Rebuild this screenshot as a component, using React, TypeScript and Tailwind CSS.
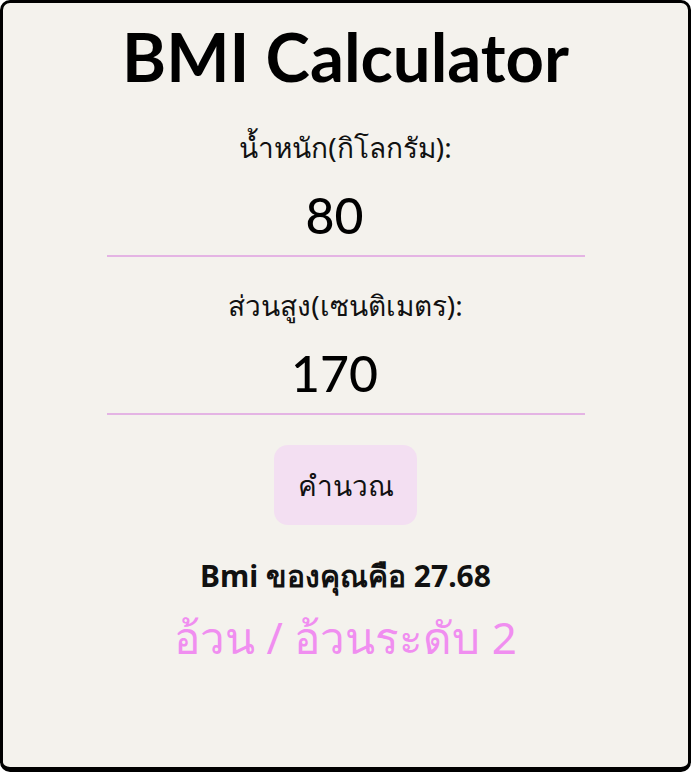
import { useState } from "react"

function Field({ label, value }: { label: string; value: string }) {
  return (
    <div className="flex flex-col items-center w-[478px]">
      <label className="text-[28px] leading-[36px] text-[#111]">{label}</label>
      <input
        value={value}
        readOnly
        className="mt-[20px] w-full text-center text-[50px] leading-[60px] font-[Lato,'Noto_Sans',sans-serif] font-medium bg-transparent outline-none border-b-2 border-[#e4b4e4] pb-[10px] pr-[22px]"
      />
    </div>
  )
}

export default function App() {
  const [weight] = useState("80")
  const [height] = useState("170")
  const bmi = 27.68

  return (
    <div className="w-[691px] h-[772px] bg-white font-['Noto_Sans',sans-serif]">
      <div className="h-full bg-[#f4f2ed] border-[3px] border-b-[5px] border-black rounded-[10px] flex flex-col items-center">
        <h1 className="mt-[13px] text-[67px] leading-[80px] font-bold font-[Lato,sans-serif] text-black">
          BMI Calculator
        </h1>
        <div className="mt-[33px]">
          <Field label="น้ำหนัก(กิโลกรัม):" value={weight} />
        </div>
        <div className="mt-[30px]">
          <Field label="ส่วนสูง(เซนติเมตร):" value={height} />
        </div>
        <button className="mt-[30px] w-[143px] h-[80px] rounded-[14px] bg-[#f3dff2] text-[28px] text-[#111]">
          คำนวณ
        </button>
        <p className="mt-[33px] text-[30px] leading-[36px] font-bold text-[#111]">
          Bmi ของคุณคือ {bmi}
        </p>
        <p className="mt-[15px] text-[44px] leading-[56px] text-[#f08ef0]">อ้วน / อ้วนระดับ 2</p>
      </div>
    </div>
  )
}
